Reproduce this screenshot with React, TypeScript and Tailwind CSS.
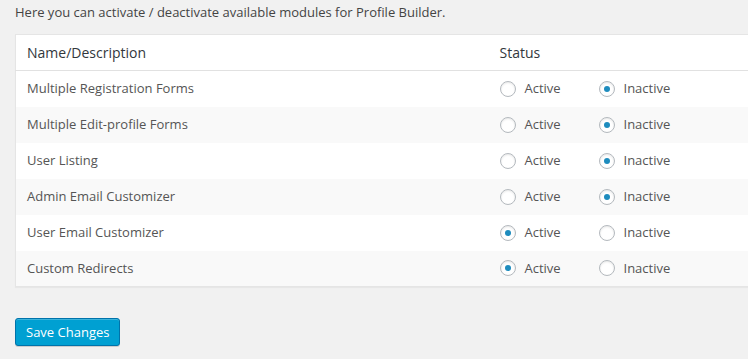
import { useState } from 'react'

const MODULES = [
  { name: 'Multiple Registration Forms', active: false },
  { name: 'Multiple Edit-profile Forms', active: false },
  { name: 'User Listing', active: false },
  { name: 'Admin Email Customizer', active: false },
  { name: 'User Email Customizer', active: true },
  { name: 'Custom Redirects', active: true },
]

function Radio({ checked, label, onClick }: { checked: boolean; label: string; onClick: () => void }) {
  return (
    <label onClick={onClick} className="flex items-center cursor-pointer">
      <span className="w-4 h-4 rounded-full border border-[#b4b9be] bg-white shadow-[inset_0_1px_2px_rgba(0,0,0,0.1)] flex items-center justify-center">
        {checked && <span className="w-[6px] h-[6px] rounded-full bg-[#1e8cbe]" />}
      </span>
      <span className="ml-[9px]">{label}</span>
    </label>
  )
}

export default function App() {
  const [mods, setMods] = useState(MODULES)

  function setActive(i: number, active: boolean) {
    setMods(prev => prev.map((m, j) => (j === i ? { ...m, active } : m)))
  }

  return (
    <main className="min-h-screen w-[748px] overflow-hidden bg-[#f1f1f1] text-[13px] text-[#444] font-['Open_Sans',sans-serif]">
      <div className="pl-[15px]">
        <p className="pt-[3px] h-[34px] leading-[19px]">Here you can activate / deactivate available modules for Profile Builder.</p>

        <table className="w-[780px] border border-[#e5e5e5] bg-white shadow-[0_1px_1px_rgba(0,0,0,0.04)] border-collapse">
          <thead>
            <tr className="h-[36px] border-b border-[#e1e1e1]">
              <th className="text-left font-normal text-[14px] text-[#32373c] pl-[11px] w-[474px]">Name/Description</th>
              <th className="text-left font-normal text-[14px] text-[#32373c] pl-[10px]">Status</th>
            </tr>
          </thead>
          <tbody>
            {mods.map((m, i) => (
              <tr key={m.name} className={`h-[36px] ${i % 2 === 1 ? 'bg-[#f9f9f9]' : 'bg-white'}`}>
                <td className="pl-[11px] text-[#555]">{m.name}</td>
                <td className="pl-[10px] text-[#555]">
                  <div className="flex items-center">
                    <div className="w-[99px]">
                      <Radio checked={m.active} label="Active" onClick={() => setActive(i, true)} />
                    </div>
                    <Radio checked={!m.active} label="Inactive" onClick={() => setActive(i, false)} />
                  </div>
                </td>
              </tr>
            ))}
          </tbody>
        </table>

        <div className="pt-[31px]">
          <button className="h-[28px] px-[10px] rounded-[3px] bg-[#00a0d2] border border-[#0073aa] shadow-[inset_0_1px_0_rgba(120,200,230,0.5),0_1px_0_rgba(0,0,0,0.15)] text-white text-[13px] leading-[26px]">
            Save Changes
          </button>
        </div>
      </div>
    </main>
  )
}
